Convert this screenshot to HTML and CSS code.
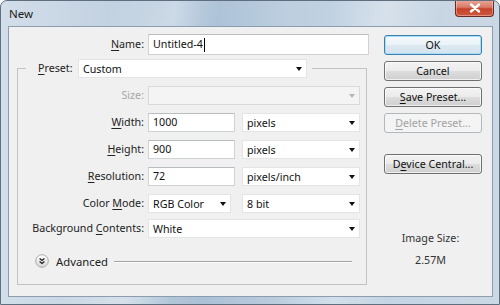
FILE: index.html
```html
<!DOCTYPE html>
<html lang="en">
<head>
    <meta charset="UTF-8">
    <title>New</title>
    <link rel="stylesheet" href="styles.css">
</head>
<body>
    <div class="window">
        <div class="titlebar">
            <span class="title">New</span>
            <div class="close">
                <svg width="12" height="10" viewBox="0 0 12 10">
                    <path d="M2 1.5 L10 8.5 M10 1.5 L2 8.5" stroke="#fff" stroke-width="2.4" stroke-linecap="round"/>
                </svg>
            </div>
        </div>

        <div class="client">
            <div class="form">
                <div class="name-row">
                    <label class="lbl"><u>N</u>ame:</label>
                    <div class="input">Untitled-4<span class="caret"></span></div>
                </div>

                <fieldset class="group">
                    <legend class="legend">
                        <label><u>P</u>reset:</label>
                        <div class="select preset">Custom<span class="arrow"></span></div>
                    </legend>

                    <div class="row">
                        <label class="lbl disabled">Size:</label>
                        <div class="select off"><span class="arrow"></span></div>
                    </div>
                    <div class="row">
                        <label class="lbl"><u>W</u>idth:</label>
                        <div class="pair">
                            <div class="input">1000</div>
                            <div class="select">pixels<span class="arrow"></span></div>
                        </div>
                    </div>
                    <div class="row">
                        <label class="lbl"><u>H</u>eight:</label>
                        <div class="pair">
                            <div class="input">900</div>
                            <div class="select">pixels<span class="arrow"></span></div>
                        </div>
                    </div>
                    <div class="row">
                        <label class="lbl"><u>R</u>esolution:</label>
                        <div class="pair">
                            <div class="input">72</div>
                            <div class="select">pixels/inch<span class="arrow"></span></div>
                        </div>
                    </div>
                    <div class="row">
                        <label class="lbl">Color <u>M</u>ode:</label>
                        <div class="pair mode">
                            <div class="select">RGB Color<span class="arrow"></span></div>
                            <div class="select">8 bit<span class="arrow"></span></div>
                        </div>
                    </div>
                    <div class="row bg-row">
                        <label class="lbl">Background <u>C</u>ontents:</label>
                        <div class="select">White<span class="arrow"></span></div>
                    </div>

                    <div class="advanced">
                        <svg class="adv-icon" width="14" height="14" viewBox="0 0 14 14">
                            <defs>
                                <linearGradient id="advfill" x1="0" y1="0" x2="0" y2="1">
                                    <stop offset="0" stop-color="#ffffff"/>
                                    <stop offset="1" stop-color="#d6d6d6"/>
                                </linearGradient>
                            </defs>
                            <circle cx="7" cy="7" r="6.3" fill="url(#advfill)" stroke="#a9a9a9"/>
                            <path d="M4.6 4.4 L7 6.4 L9.4 4.4 M4.6 7.4 L7 9.4 L9.4 7.4" fill="none" stroke="#222" stroke-width="1.3"/>
                        </svg>
                        <span>Advanced</span>
                        <span class="rule"></span>
                    </div>
                </fieldset>
            </div>

            <div class="side">
                <div class="btn default">OK</div>
                <div class="btn">Cancel</div>
                <div class="btn"><u>S</u>ave Preset...</div>
                <div class="btn off"><u>D</u>elete Preset...</div>
                <div class="btn device">D<u>e</u>vice Central...</div>
                <div class="size-info">
                    <div>Image Size:</div>
                    <div>2.57M</div>
                </div>
            </div>
        </div>
    </div>
</body>
</html>
```

FILE: styles.css
```css
* {
    box-sizing: border-box;
}

body {
    margin: 0;
    font-family: "Noto Sans", "Open Sans", sans-serif;
    font-size: 10.7px;
    color: #222;
}

u {
    text-decoration-thickness: 1px;
    text-underline-offset: 2px;
}

.window {
    width: 500px;
    height: 305px;
    display: flex;
    flex-direction: column;
    border: 1px solid #5f6f80;
    border-radius: 7px 7px 0 0;
    overflow: hidden;
    background:
        linear-gradient(100deg, rgba(255,255,255,0) 20%, rgba(255,255,255,0.35) 32%, rgba(255,255,255,0) 40%, rgba(255,255,255,0) 60%, rgba(255,255,255,0.3) 70%, rgba(255,255,255,0) 80%),
        linear-gradient(to right, #d2dee9 0%, #c3d2e1 22%, #aac0d6 40%, #bdcfe0 58%, #c6d5e3 80%, #cbd8e4 100%);
}

.titlebar {
    height: 25px;
    flex: none;
    display: flex;
    align-items: flex-start;
    padding: 0 5px 0 8px;
}

.title {
    padding-top: 6px;
    line-height: 14px;
    font-size: 11.5px;
    color: #1a1a1a;
}

.close {
    margin-left: auto;
    margin-top: -1px;
    width: 39px;
    height: 17px;
    display: flex;
    align-items: center;
    justify-content: center;
    border: 1px solid #6b2a20;
    border-top: none;
    border-radius: 0 0 4px 4px;
    background: linear-gradient(#e9a99b 0%, #d87a66 45%, #c4432b 55%, #d0583c 100%);
    box-shadow: inset 0 0 0 1px rgba(255,255,255,0.35);
}

.client {
    height: 271px;
    flex: none;
    margin: 0 6px 0 7px;
    border: 1px solid #8d9db0;
    background: #f0f0f0;
    display: flex;
    gap: 15px;
    padding: 7px 10px 0 8px;
}

.form {
    width: 352px;
    flex: none;
}

.name-row {
    display: grid;
    grid-template-columns: 127px 1fr;
    column-gap: 4px;
    height: 21px;
}

.lbl {
    text-align: right;
    line-height: 19px;
    white-space: nowrap;
}

.name-row .lbl {
    line-height: 21px;
}

.disabled {
    color: #a6a6a6;
}

.input {
    background: #fff;
    border: 1px solid #cfd3d6;
    border-top-color: #b9bdc1;
    padding-left: 4px;
    line-height: 17px;
    white-space: nowrap;
    display: flex;
    align-items: center;
    color: #111;
}

.caret {
    display: inline-block;
    width: 1px;
    height: 14px;
    background: #000;
    margin-left: 1px;
}

.select {
    background: #fff;
    border: 1px solid #e4e4e4;
    padding-left: 4px;
    display: flex;
    align-items: center;
    white-space: nowrap;
    color: #111;
}

.select.off {
    background: #f4f4f4;
    border-color: #d9d9d9;
}

.arrow {
    margin-left: auto;
    margin-right: 4px;
    width: 0;
    height: 0;
    border-top: 4px solid #111;
    border-left: 3.5px solid transparent;
    border-right: 3.5px solid transparent;
}

.off .arrow {
    border-top-color: #b5b5b5;
}

.group {
    margin: 4px 2px 0 0;
    border: 1px solid #c3c3c3;
    padding: 8px 6px 16px 8px;
    min-width: 0;
}

.legend {
    display: flex;
    align-items: center;
    padding: 0 5px 0 12px;
}

.legend label {
    width: 40px;
    line-height: 19px;
}

.preset {
    width: 229px;
    height: 19px;
}

.row {
    display: grid;
    grid-template-columns: 118px 1fr;
    column-gap: 4px;
    height: 19px;
    margin-top: 8px;
}

.row:first-of-type {
    margin-top: 0;
}

.row.bg-row {
    margin-top: 6px;
}

.pair {
    display: grid;
    grid-template-columns: 87px 1fr;
    column-gap: 7px;
}

.pair.mode {
    grid-template-columns: 83px 1fr;
    column-gap: 11px;
}

.advanced {
    margin-top: 16px;
    height: 14px;
    display: flex;
    align-items: center;
    padding-left: 9px;
    font-size: 11.3px;
}

.adv-icon {
    margin-right: 7px;
}

.rule {
    flex: 1;
    height: 2px;
    margin: 1px 8px 0 6px;
    border-top: 1px solid #a3a3a3;
    border-bottom: 1px solid #ffffff;
}

.side {
    width: 98px;
    flex: none;
    display: flex;
    flex-direction: column;
    gap: 6px;
    padding-top: 1px;
}

.btn {
    height: 20px;
    line-height: 18px;
    text-align: center;
    border: 1px solid #707070;
    border-radius: 3px;
    background: linear-gradient(#f3f3f3 0%, #ebebeb 48%, #dddddd 52%, #cfcfcf 100%);
    box-shadow: inset 0 0 0 1px rgba(255,255,255,0.7);
    color: #111;
}

.btn.default {
    border-color: #3c7fb1;
    background: linear-gradient(#f4f9fc 0%, #eaf3f8 48%, #dde9f1 52%, #d3e3ee 100%);
    box-shadow: inset 0 0 0 1px #a8def5;
}

.btn.off {
    border-color: #b4b8bb;
    background: #f4f4f4;
    box-shadow: none;
    color: #a3a3a3;
}

.btn.device {
    margin-top: 15px;
}

.size-info {
    margin-top: 47px;
    padding-right: 5px;
    text-align: center;
    line-height: 22px;
    color: #333;
}
```
